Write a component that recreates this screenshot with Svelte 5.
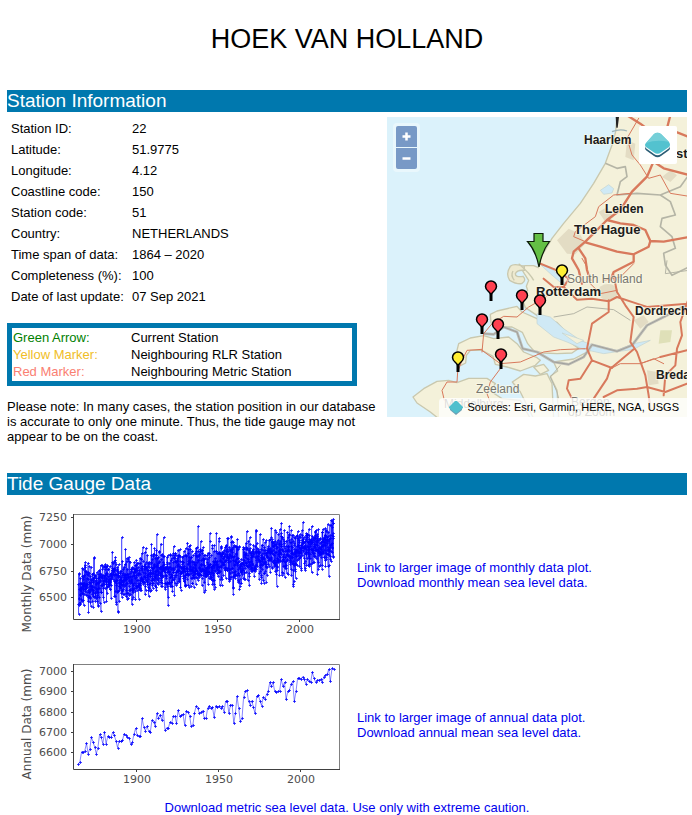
<script>
  const station = [
    ['Station ID:', '22'],
    ['Latitude:', '51.9775'],
    ['Longitude:', '4.12'],
    ['Coastline code:', '150'],
    ['Station code:', '51'],
    ['Country:', 'NETHERLANDS'],
    ['Time span of data:', '1864 – 2020'],
    ['Completeness (%):', '100'],
    ['Date of last update:', '07 Sep 2021']
  ];

  const legend = [
    ['Green Arrow:', 'Current Station', 'green'],
    ['Yellow Marker:', 'Neighbouring RLR Station', 'yellow'],
    ['Red Marker:', 'Neighbouring Metric Station', 'red']
  ];

  // Marker tips, in map pixels
  const markers = [
    { x: 104, y: 183, fill: '#ff4050' },
    { x: 135, y: 192, fill: '#ff4050' },
    { x: 153, y: 197, fill: '#ff4050' },
    { x: 95, y: 216, fill: '#ff4050' },
    { x: 111, y: 221, fill: '#ff4050' },
    { x: 114, y: 251, fill: '#ff4050' },
    { x: 175, y: 167, fill: '#ffee33' },
    { x: 71, y: 254, fill: '#ffee33' }
  ];

  // Annual mean level for each year from 1864, in thirds of a plot pixel from the top
  const annual = [
    328, 320, 290, 292, 287, 265, 296, 281, 247, 260, 277, 296, 278, 238, 247, 266, 232, 266, 244, 247,
    247, 232, 241, 257, 278, 257, 259, 256, 236, 241, 247, 248, 268, 262, 238, 220, 241, 244, 244, 190,
    217, 227, 214, 229, 232, 196, 200, 214, 175, 190, 179, 196, 169, 226, 218, 220, 202, 205, 184, 184,
    205, 166, 184, 181, 178, 211, 167, 170, 182, 214, 209, 173, 154, 160, 175, 170, 167, 190, 190, 160,
    152, 160, 157, 187, 152, 157, 154, 160, 154, 170, 139, 139, 175, 149, 149, 205, 175, 124, 160, 199,
    190, 127, 109, 106, 139, 149, 137, 157, 175, 124, 121, 137, 152, 127, 133, 118, 109, 82, 94, 82,
    109, 112, 109, 109, 73, 94, 82, 133, 109, 106, 87, 79, 139, 109, 70, 70, 73, 65, 73, 86,
    73, 79, 82, 52, 70, 82, 76, 74, 73, 82, 65, 59, 58, 43, 79, 40, 43
  ];
  const step = 255.3 / (annual.length - 1);
  const annualPoints = annual.map((v, i) => [68.3 + i * step, v / 3 + 5]);

  let seed = 4217;
  const rand = () => {
    seed = (seed * 1664525 + 1013904223) % 4294967296;
    return seed / 4294967296;
  };
  const level = (v) => 7000 - (v - 48) / 0.61;
  const monthlyPoints = [];
  annual.forEach((v, i) => {
    for (let m = 0; m < 12; m++) {
      const noise = (rand() + rand() + rand() + rand() - 2) * 165;
      const surge = rand() > 0.955 ? (rand() - 0.42) * 420 : 0;
      const season = -35 * Math.cos(((m - 2) * Math.PI) / 6);
      const mm = Math.min(level(v) + noise + surge + season, 7240);
      monthlyPoints.push([68.3 + (i + m / 12) * (255.3 / annual.length), 44.3 - (mm - 7000) * 0.107]);
    }
  });
  monthlyPoints[2][1] = 114;

  const line = (pts) => pts.map(([x, y], i) => `${i ? 'L' : 'M'}${x.toFixed(1)} ${y.toFixed(1)}`).join('');
  const dots = (pts) =>
    pts.map(([x, y]) => `M${Math.round(x) - 1} ${Math.round(y) + 0.5}h3m-1.5 -1.5v3`).join('');

  const charts = [
    {
      label: 'Monthly Data (mm)',
      pts: monthlyPoints,
      yTicks: [['7250', 17], ['7000', 44], ['6750', 71], ['6500', 97]],
      xTicks: [['1900', 127], ['1950', 208], ['2000', 290]],
      links: ['Link to larger image of monthly data plot.', 'Download monthly mean sea level data.']
    },
    {
      label: 'Annual Data (mm)',
      pts: annualPoints,
      yTicks: [['7000', 21], ['6900', 41], ['6800', 62], ['6700', 82], ['6600', 102]],
      xTicks: [['1900', 127], ['1950', 209], ['2000', 291]],
      links: ['Link to larger image of annual data plot.', 'Download annual mean sea level data.']
    }
  ];
</script>

<main>
  <h1>HOEK VAN HOLLAND</h1>

  <h2>Station Information</h2>
  <section class="info">
    <div class="details">
      <table class="station">
        <tbody>
          {#each station as [name, value]}
            <tr><th scope="row">{name}</th><td>{value}</td></tr>
          {/each}
        </tbody>
      </table>

      <table class="legend">
        <tbody>
          {#each legend as [name, value, tone]}
            <tr><th scope="row" class={tone}>{name}</th><td>{value}</td></tr>
          {/each}
        </tbody>
      </table>

      <p class="note">
        Please note: In many cases, the station position in our database is accurate to only one
        minute. Thus, the tide gauge may not appear to be on the coast.
      </p>
    </div>

    <div class="map">
      <svg class="terrain" viewBox="0 0 900 900" aria-hidden="true">
        <rect width="900" height="900" fill="#dbf2fb" />
        <g fill="#f4f1da" stroke="#c9c8ae" stroke-width="4" stroke-linejoin="round">
          <path d="M690 -5L686 44L675 84L655 139L620 199L580 259L530 319L495 364L475 399L456 428L454 452L440 446L415 446L400 450L412 470L425 490L418 508L422 520L405 542L415 572L460 602L510 616L540 648L590 676L610 700L560 726L520 732L500 735L512 762L490 778L510 820L515 905L905 905L905 -5Z" />
          <path d="M310 592L330 582L390 568L405 585L450 605L510 650L555 680L575 694L555 708L510 710L470 708L442 703L422 680L406 646L375 630L330 630L312 618Z" />
          <path d="M210 700L215 680L250 663L290 656L320 665L365 660L390 680L410 705L450 722L460 730L445 745L400 762L360 750L325 742L318 718L285 700L250 700L238 715L236 738L222 745L212 735Z" />
          <path d="M440 750L470 742L485 760L460 772Z" />
          <path d="M376 795L410 772L445 777L480 770L495 800L500 905L440 905L400 825Z" />
          <path d="M78 840L110 815L150 793L185 790L210 797L245 784L300 784L325 800L310 822L345 845L400 850L430 905L155 905L130 885L90 858Z" />
        </g>
        <g fill="#eeead0" stroke="#c9c8ae" stroke-width="4">
          <path d="M412 448Q380 438 370 448Q355 470 368 490Q388 502 404 500Q420 490 408 478Q385 482 385 470Q390 458 412 460Z" />
          <path d="M378 462Q370 475 382 490M395 440Q430 470 440 490" fill="none" />
        </g>
        <g fill="#e3dcc4">
          <path d="M510 370L545 335L578 350L595 380L565 412L540 410Z" />
          <ellipse cx="663" cy="525" rx="30" ry="24" />
          <path d="M635 285L660 270L680 300L655 315ZM720 70L745 80L740 130L715 120ZM825 180L850 160L870 175L850 195Z" />
          <path d="M780 760L810 765L815 800L785 805ZM740 610L770 595L785 615L760 635Z" />
        </g>
        <path d="M820 640L855 640L850 675L815 680Z" fill="#dfe0b8" />
        <g fill="#cfe9f5" stroke="#c2d3d0" stroke-width="2">
          <path d="M450 590L490 600L530 635L580 670L605 680L690 700L740 680L790 670L740 697L650 710L590 697L540 675L500 660L450 620Z" />
          <path d="M640 220L665 203L680 215L675 228L650 232ZM455 438L500 460L540 505L525 500L490 470Z" />
          <path d="M525 648L590 670L570 680Z" fill="#f4f1da" />
        </g>
        <g fill="none" stroke="#b5b5a6" stroke-width="5" stroke-linejoin="round">
          <path d="M655 139L690 154L715 149L720 179L700 194L690 234L750 229L820 234L880 209L905 174M820 234L850 254L865 294L825 304L820 329L855 359L865 394L830 409L835 444L855 475L905 450" />
          <path d="M520 745L490 780L510 825L515 845M500 600L560 590L600 570L680 578L730 610M840 430L835 470L905 460" stroke-width="3" />
        </g>
        <g fill="none" stroke="#bdbdb6" stroke-width="8" stroke-linejoin="round">
          <path d="M290 650L320 652L350 630L390 645L407 695L450 705L500 735L545 742L590 720L615 683L690 703L735 685L780 625L830 600L905 560" />
        </g>
        <path d="M290 650L320 652L350 630L390 645L407 695L450 705L500 735L545 742L590 720L615 683L690 703L735 685L780 625L830 600L905 560" fill="none" stroke="#93938f" stroke-width="2" />
        <g fill="none" stroke="#d8795c" stroke-linejoin="round" stroke-linecap="round">
          <path stroke-width="7" d="M795 144L780 179L735 224L700 279L660 309L595 374L560 404L555 424L575 459L585 500M660 309L700 319L740 324L775 339L790 372L785 389L740 412L690 404L640 389L595 376M790 372L830 374L900 361M740 412L740 434L680 465L670 490M575 394L595 424L600 459L610 490M795 144L800 134L830 154L905 174M850 -5L840 34L905 60M720 -5L760 20L800 50" />
          <path stroke-width="6" d="M680 475L690 525L715 565L740 600L730 675L750 705L775 775L785 835L790 875M665 550L665 585L615 620L600 695L615 730L580 785L545 790L540 815L555 845M455 438L510 460L545 485L530 510L570 548L615 545L665 553L690 540L750 560L780 570L905 560M905 545L880 615L885 655L870 695L865 745L835 775L830 835M740 697L670 755L660 785L620 845M615 730L675 753M820 720L900 700M650 840L690 820L750 815L780 810L835 825L900 800M470 485L500 510L530 510" />
          <path stroke-width="3" d="M755 4L720 64L735 114L760 144L785 184L820 174L850 229L900 237M730 229L680 234L635 269L625 299L565 344L560 359L595 374M585 424L600 450M285 705L290 650L315 620L350 598L390 600L425 570L460 550L490 530M285 700L340 740L400 735L470 705L520 698L595 695M340 755L310 795L300 830L315 870M285 697L240 700L225 730L212 765L210 795L180 795L165 820L172 850M675 753L700 740L760 740L820 720M760 740L800 725L830 740M650 490L700 480L740 440M690 520L640 530L610 500" />
        </g>
        <path d="M686 0L696 0L692 32L688 32Z" fill="#222" />
        <path d="M675 44Q700 34 720 42" fill="none" stroke="#9fb4b8" stroke-width="4" />
      </svg>

      <svg class="overlay" viewBox="0 0 300 300" role="img" aria-label="Map of tide gauge stations around Hoek van Holland">
        <g class="faint">
          <text x="180" y="166">South Holland</text>
          <text x="89" y="276">Zeeland</text>
          <text x="57" y="291">Middelburg</text>
          <text x="184" y="289">Bergen</text>
          <text x="181" y="299">op Zoom</text>
        </g>
        <g class="place">
          <text x="197" y="27">Haarlem</text>
          <text x="218" y="96">Leiden</text>
          <text x="248" y="198">Dordrecht</text>
          <text x="269" y="262">Breda</text>
        </g>
        <g class="city">
          <text x="187" y="117">The Hague</text>
          <text x="149" y="179">Rotterdam</text>
          <text x="268" y="41">Amsterdam</text>
        </g>
        {#each markers as m}
          <g transform="translate({m.x} {m.y})">
            <path d="M0 1V-9" stroke="#000" stroke-width="3" />
            <path d="M0 -5C-1 -9 -5.500 -9 -5.500 -13.500A5.500 5.500 0 0 1 5.500 -13.500C5.500 -9 1 -9 0 -5Z" fill={m.fill} stroke="#000" stroke-width="1.500" />
          </g>
        {/each}
        <path d="M147 116.500H156V124.500H162.500Q155 134 152 150Q149 134 140.500 124.500H147Z" fill="#64bf45" stroke="#0c1a08" stroke-width="1.200" />
      </svg>

      <div class="zoom">
        <button type="button" aria-label="Zoom in"><svg viewBox="0 0 9 9"><path d="M4.500 0.500V8.500M0.500 4.500H8.500" /></svg></button>
        <button type="button" aria-label="Zoom out"><svg viewBox="0 0 9 9"><path d="M0.500 4.500H8.500" /></svg></button>
      </div>

      <button type="button" class="layers" aria-label="Choose base layer">
        <svg viewBox="0 0 38 38">
          <path d="M6 19V22Q6 24 8 25L15 30Q18.500 32.500 22 30L29 25Q31 24 31 22V19Z" fill="#2b5d75" />
          <path d="M6 18V20Q6 22 8 23L15 28Q18.500 30.500 22 28L29 23Q31 22 31 20V18Z" fill="#fff" />
          <path d="M7 21Q5 19 7 17L15 8Q18.500 5.500 22 8L30 16Q32 19 30 21L22 26.500Q18.500 29 15 26.500Z" fill="#53c2cf" />
          <path d="M7 17L15 8Q18.500 5.500 22 8L30 16Q18 13 7 17Z" fill="#75cfd8" />
        </svg>
      </button>

      <div class="credit">
        <svg viewBox="0 0 14 14"><path d="M1 9L7 14L13 9V7H1Z" fill="#6d9fb3" /><path d="M0 6L6 0H8L14 6V7L8 12H6L0 7Z" fill="#4fbfcd" /></svg>
        <span>Sources: Esri, Garmin, HERE, NGA, USGS</span>
      </div>
    </div>
  </section>

  <h2>Tide Gauge Data</h2>
  {#each charts as c}
    <section class="plot">
      <svg class="chart" viewBox="0 0 350 150" role="img" aria-label={c.label}>
        <path d={line(c.pts)} fill="none" stroke="#0000ff" stroke-opacity="0.6" stroke-width="0.8" />
        <path d={dots(c.pts)} fill="none" stroke="#0000ff" stroke-width="1" stroke-opacity="0.7" />
        <path d="M63.500 14.500H329.500V119.500" fill="none" stroke="#808080" />
        <path d="M63.500 14V119.500H330" fill="none" stroke="#404040" />
        {#each c.yTicks as [t, y]}
          <path d="M61 {y + 0.5}H63" stroke="#404040" />
          <text x="57" y={y + 4} text-anchor="end">{t}</text>
        {/each}
        {#each c.xTicks as [t, x]}
          <path d="M{x - 0.5} 120V122" stroke="#404040" />
          <text {x} y="133" text-anchor="middle">{t}</text>
        {/each}
        <text class="axis" transform="translate(21 74) rotate(-90)" text-anchor="middle">{c.label}</text>
      </svg>
      <div class="links">
        {#each c.links as l}<a href="#data">{l}</a>{/each}
      </div>
    </section>
  {/each}

  <p class="metric"><a href="#metric">Download metric sea level data. Use only with extreme caution.</a></p>
</main>

<style>
  :global(body) {
    background: #fff;
  }
  main {
    padding: 0 5px 0 7px;
    color: #000;
    font: 13px/15px 'Liberation Sans', Arial, sans-serif;
  }
  h1 {
    margin: 0;
    padding: 23px 0 35px;
    font-size: 27px;
    line-height: 32px;
    font-weight: 400;
    text-align: center;
  }
  h2 {
    margin: 0;
    background: #0078ae;
    color: #fff;
    font-size: 19px;
    line-height: 22px;
    font-weight: 400;
  }
  .info {
    display: grid;
    grid-template-columns: minmax(0, 1fr) 300px;
    padding: 5px 0 29px;
  }
  table {
    border-collapse: collapse;
  }
  th,
  td {
    padding: 0;
    font-weight: 400;
    text-align: left;
  }
  .station {
    margin: 1px 0 0 4px;
  }
  .station tr {
    height: 21px;
  }
  .station th {
    width: 121px;
  }
  .legend {
    box-sizing: border-box;
    width: 350px;
    max-width: 100%;
    margin-top: 16px;
    border: 5px solid #0078ae;
    border-collapse: separate;
    border-spacing: 0;
    padding: 1px;
  }
  .legend tr {
    height: 17px;
  }
  .legend th {
    width: 118px;
  }
  .green {
    color: #008000;
  }
  .yellow {
    color: #f0bd27;
  }
  .red {
    color: #fa8072;
  }
  .note {
    margin: 13px 0 0;
  }
  .map {
    position: relative;
    height: 300px;
    overflow: hidden;
    background: #dbf2fb;
  }
  .terrain,
  .overlay {
    position: absolute;
    inset: 0;
    width: 300px;
    height: 300px;
  }
  .overlay text {
    font-size: 12px;
    fill: #1c1c1c;
    stroke: #fdfbea;
    stroke-width: 2px;
    stroke-opacity: 0.6;
    paint-order: stroke;
  }
  .overlay .place text {
    font-size: 12px;
    font-weight: 700;
  }
  .overlay .city text {
    font-size: 13px;
    font-weight: 700;
  }
  .overlay .faint text {
    font-size: 12px;
    fill: #77776f;
  }
  .zoom {
    position: absolute;
    top: 6px;
    left: 6px;
    display: grid;
    gap: 1px;
    padding: 3px;
    border-radius: 4px;
    background: rgba(255, 255, 255, 0.4);
  }
  .zoom button {
    display: grid;
    place-items: center;
    width: 21px;
    height: 21px;
    padding: 0;
    border: 0;
    border-radius: 2px 2px 0 0;
    background: #7899c6;
  }
  .zoom button + button {
    border-radius: 0 0 2px 2px;
  }
  .zoom svg {
    width: 9px;
    height: 9px;
    stroke: #fff;
    stroke-width: 2.5;
  }
  .layers {
    position: absolute;
    top: 9px;
    right: 10px;
    width: 38px;
    height: 38px;
    padding: 0;
    border: 0;
    border-radius: 2px;
    background: #fff;
  }
  .layers svg {
    display: block;
  }
  .credit {
    position: absolute;
    right: 0;
    bottom: 0;
    display: flex;
    align-items: center;
    gap: 5px;
    padding: 0 8px 0 10px;
    border-radius: 4px 0 0 0;
    background: rgba(255, 255, 255, 0.75);
    font-size: 11px;
    line-height: 19px;
  }
  .credit svg {
    width: 14px;
    height: 14px;
  }
  .plot {
    display: flex;
    align-items: center;
    height: 150px;
  }
  h2 + .plot {
    margin-top: 5px;
  }
  .chart {
    flex: none;
    width: 350px;
    height: 150px;
    margin-left: 3px;
  }
  .chart text {
    font: 11px 'DejaVu Sans', sans-serif;
    fill: #4d4d4d;
  }
  .chart .axis {
    font-size: 12px;
  }
  .links {
    display: grid;
    margin-left: -3px;
  }
  a {
    color: #0000ee;
    text-decoration: none;
  }
  .metric {
    margin: 0;
    text-align: center;
  }
</style>
